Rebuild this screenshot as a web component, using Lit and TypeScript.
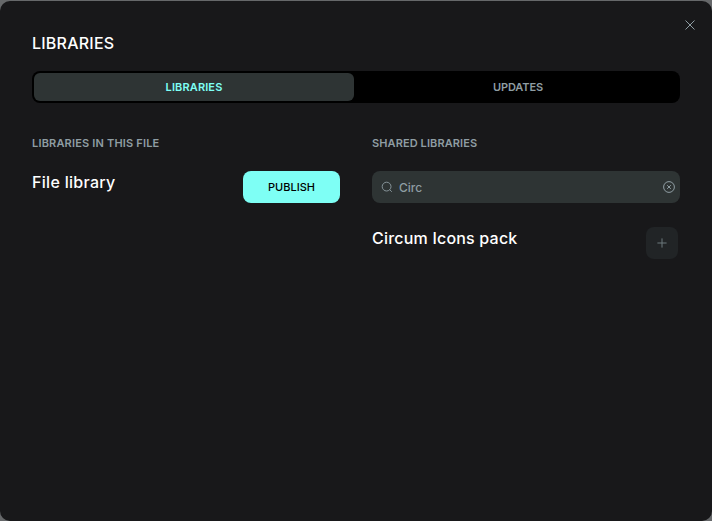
import { LitElement, html, css } from "lit";
import { customElement, state } from "lit/decorators.js";
import { classMap } from "lit/directives/class-map.js";

@customElement("app-root")
export class AppRoot extends LitElement {
  @state() private tab = "libraries";
  @state() private query = "Circ";

  static styles = css`
    :host {
      display: block;
      height: 100vh;
      box-sizing: border-box;
      padding-top: 1px;
      background: #66686a;
      font-family: Inter, "Liberation Sans", sans-serif;
    }
    * { box-sizing: border-box; }
    button { font-family: inherit; border: 0; padding: 0; margin: 0; cursor: pointer; }
    svg { display: block; fill: none; stroke: currentColor; }
    .dialog {
      position: relative;
      height: calc(100vh - 1px);
      padding: 32px;
      background: #18181a;
      border-radius: 10px;
    }
    .close {
      position: absolute;
      top: 16px;
      right: 14px;
      width: 16px;
      height: 16px;
      background: none;
      color: #8f9da3;
    }
    h1, h2, h3 { margin: 0; white-space: nowrap; }
    h1 {
      height: 38px;
      font-size: 16px;
      line-height: 21px;
      font-weight: 500;
      letter-spacing: 0.22px;
      color: #fff;
    }
    .tabs {
      display: flex;
      gap: 4px;
      height: 32px;
      padding: 2px;
      background: #000;
      border-radius: 8px;
    }
    .tab {
      flex: 1 1 0;
      padding-bottom: 1px;
      border-radius: 6px;
      background: none;
      color: #8f9da3;
      font-size: 11px;
      font-weight: 600;
    }
    .tab.active { background: #2e3434; color: #7efff5; }
    .libraries { letter-spacing: 0.12px; }
    .updates { letter-spacing: -0.12px; }
    .columns { display: grid; grid-template-columns: 308px 308px; gap: 32px; margin-top: 32px; }
    h2 {
      height: 36px;
      font-size: 11px;
      line-height: 16px;
      font-weight: 600;
      color: #8f9da3;
    }
    .in-file { letter-spacing: 0.18px; }
    .shared { letter-spacing: 0.1px; }
    .row { display: flex; justify-content: space-between; height: 32px; }
    h3 {
      font-size: 16px;
      line-height: 23px;
      font-weight: 500;
      color: #fff;
    }
    .file { letter-spacing: 0.3px; }
    .pack { letter-spacing: 0.2px; }
    .publish {
      width: 97px;
      background: #7efff5;
      border-radius: 8px;
      font-size: 11px;
      font-weight: 500;
      color: #000;
    }
    .search {
      display: flex;
      align-items: center;
      height: 32px;
      margin-bottom: 24px;
      padding: 0 3px 0 7px;
      background: #2e3434;
      border-radius: 8px;
      color: #8f9da3;
      font-size: 12px;
      font-weight: 500;
    }
    .lens { stroke-width: 0.9; }
    .query { flex: 1; padding-left: 4px; }
    .clear { background: none; color: inherit; }
    .add {
      display: grid;
      place-items: center;
      width: 32px;
      height: 32px;
      margin-right: 2px;
      border-radius: 8px;
      background: #212426;
      color: #6d787d;
    }
  `;

  private renderTab(id: string, label: string) {
    return html`<button
      class=${classMap({ tab: true, active: this.tab === id, [id]: true })}
      @click=${() => (this.tab = id)}
    >${label}</button>`;
  }

  render() {
    return html`
      <div class="dialog" role="dialog">
        <button class="close" aria-label="Close">
          <svg width="16" height="16"><path d="M3.5 3.5l9 9M12.5 3.5l-9 9" /></svg>
        </button>
        <h1>LIBRARIES</h1>
        <div class="tabs">
          ${this.renderTab("libraries", "LIBRARIES")}
          ${this.renderTab("updates", "UPDATES")}
        </div>
        <div class="columns">
          <section>
            <h2 class="in-file">LIBRARIES IN THIS FILE</h2>
            <div class="row">
              <h3 class="file">File library</h3>
              <button class="publish">PUBLISH</button>
            </div>
          </section>
          <section>
            <h2 class="shared">SHARED LIBRARIES</h2>
            <div class="search">
              <svg class="lens" width="16" height="16">
                <circle cx="7.6" cy="7.6" r="4.4" />
                <path d="M10.7 10.7l2.1 2.1" />
              </svg>
              <span class="query">${this.query}</span>
              <button class="clear" aria-label="Clear" @click=${() => (this.query = "")}>
                <svg width="16" height="16">
                  <circle cx="8" cy="8" r="5.4" />
                  <path d="M6.2 6.2l3.6 3.6M9.8 6.2l-3.6 3.6" />
                </svg>
              </button>
            </div>
            <div class="row">
              <h3 class="pack">Circum Icons pack</h3>
              <button class="add" aria-label="Add">
                <svg width="16" height="16"><path d="M8 3.4v9.2M3.4 8h9.2" /></svg>
              </button>
            </div>
          </section>
        </div>
      </div>
    `;
  }
}
